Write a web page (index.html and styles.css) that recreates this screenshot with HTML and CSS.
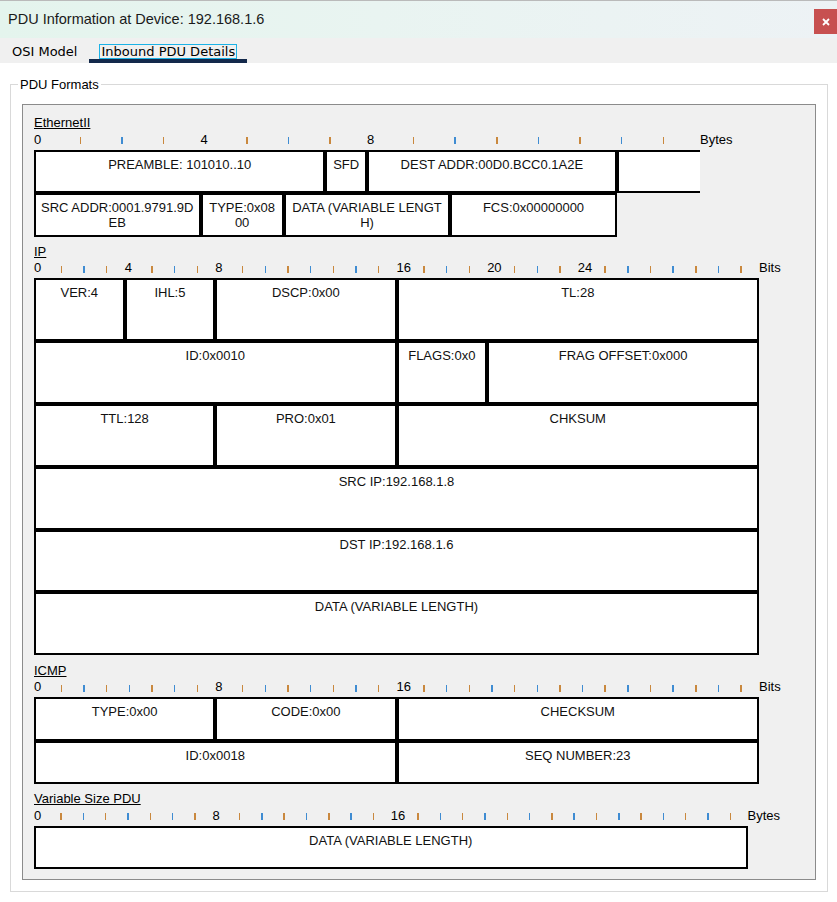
FILE: index.html
```html
<!DOCTYPE html>
<html lang="en">
<head>
<meta charset="utf-8">
<title>PDU Information at Device: 192.168.1.6</title>
<link rel="stylesheet" href="styles.css">
</head>
<body>
<div class="window">
  <header class="titlebar">
    <span class="title">PDU Information at Device: 192.168.1.6</span>
    <button class="close" aria-label="Close">
      <svg width="8" height="8" viewBox="0 0 8 8"><path d="M1 1L7 7M7 1L1 7" stroke="#fff" stroke-width="1.8" fill="none"/></svg>
    </button>
  </header>
  <nav class="tabs">
    <div class="tab">OSI Model</div>
    <div class="tab active"><span class="focus">Inbound PDU Details</span></div>
  </nav>
  <main class="content">
    <fieldset class="group">
      <legend>PDU Formats</legend>
      <div class="panel">

        <section class="pdu eth">
          <div class="pdu-title">EthernetII</div>
          <div class="ruler">
            <span class="num c0">0</span>
            <span class="num c4">4</span>
            <span class="num c8">8</span>
            <span class="unit">Bytes</span>
          </div>
          <div class="boxes">
            <div class="cell s7">PREAMBLE: 101010..10</div>
            <div class="cell s1">SFD</div>
            <div class="cell s6">DEST ADDR:00D0.BCC0.1A2E</div>
            <div class="cell s2 open"></div>
            <div class="cell s4">SRC ADDR:0001.9791.9DEB</div>
            <div class="cell s2">TYPE:0x0800</div>
            <div class="cell s4">DATA (VARIABLE LENGTH)</div>
            <div class="cell s4">FCS:0x00000000</div>
          </div>
        </section>

        <section class="pdu ip">
          <div class="pdu-title">IP</div>
          <div class="ruler">
            <span class="num c0">0</span>
            <span class="num c4">4</span>
            <span class="num c8">8</span>
            <span class="num c16">16</span>
            <span class="num c20">20</span>
            <span class="num c24">24</span>
            <span class="unit">Bits</span>
          </div>
          <div class="boxes">
            <div class="cell s4">VER:4</div>
            <div class="cell s4">IHL:5</div>
            <div class="cell s8">DSCP:0x00</div>
            <div class="cell s16">TL:28</div>
            <div class="cell s16">ID:0x0010</div>
            <div class="cell s4">FLAGS:0x0</div>
            <div class="cell s12">FRAG OFFSET:0x000</div>
            <div class="cell s8">TTL:128</div>
            <div class="cell s8">PRO:0x01</div>
            <div class="cell s16">CHKSUM</div>
            <div class="cell s32">SRC IP:192.168.1.8</div>
            <div class="cell s32">DST IP:192.168.1.6</div>
            <div class="cell s32">DATA (VARIABLE LENGTH)</div>
          </div>
        </section>

        <section class="pdu icmp">
          <div class="pdu-title">ICMP</div>
          <div class="ruler">
            <span class="num c0">0</span>
            <span class="num c8">8</span>
            <span class="num c16">16</span>
            <span class="unit">Bits</span>
          </div>
          <div class="boxes">
            <div class="cell s8">TYPE:0x00</div>
            <div class="cell s8">CODE:0x00</div>
            <div class="cell s16">CHECKSUM</div>
            <div class="cell s16">ID:0x0018</div>
            <div class="cell s16">SEQ NUMBER:23</div>
          </div>
        </section>

        <section class="pdu var">
          <div class="pdu-title">Variable Size PDU</div>
          <div class="ruler">
            <span class="num c0">0</span>
            <span class="num c8">8</span>
            <span class="num c16">16</span>
            <span class="unit">Bytes</span>
          </div>
          <div class="boxes">
            <div class="cell s32">DATA (VARIABLE LENGTH)</div>
          </div>
        </section>

      </div>
    </fieldset>
  </main>
</div>
</body>
</html>
```
FILE: styles.css
```css
html, body {
  margin: 0;
  padding: 0;
  background: #fff;
}

.window {
  width: 837px;
  height: 902px;
  overflow: hidden;
  background: #fff;
  font-family: "Liberation Sans", Arial, sans-serif;
  color: #000;
}

/* ---------- title bar ---------- */
.titlebar {
  height: 38px;
  box-sizing: border-box;
  border-top: 1px solid #bababa;
  background: linear-gradient(to right, #e4f4ed 0%, #e9f4f1 45%, #edf2f5 100%);
  display: flex;
  justify-content: space-between;
  align-items: center;
  padding-left: 8px;
}

.title {
  font: 14.5px/17px "Liberation Sans", Arial, sans-serif;
  color: #1a1a1a;
}

.close {
  align-self: flex-start;
  margin-top: 8px;
  width: 23px;
  height: 25px;
  padding: 0;
  border: 0;
  background: #c75050;
  display: flex;
  align-items: center;
  justify-content: center;
}

/* ---------- tabs ---------- */
.tabs {
  display: flex;
  height: 25px;
  background: #f0f0f0;
}

.tab {
  box-sizing: border-box;
  height: 25px;
  padding: 6px 12px 0;
  font: 13px/15px "DejaVu Sans", Verdana, sans-serif;
  color: #000;
}

.tab.active {
  padding: 6px 10px 0;
  border-bottom: 4px solid #13294b;
}

.focus {
  display: inline-block;
  line-height: 13px;
  padding: 0 1px;
  border: 1px solid #1cb2e6;
}

/* ---------- group box ---------- */
.group {
  margin: 13.5px 9px 0 10px;
  padding: 12px 0 11px;
  border: 1px solid #d9d9d9;
  min-width: 0;
}

.group legend {
  margin-left: 7px;
  padding: 0 2px;
  font: 13px/15px "Liberation Sans", Arial, sans-serif;
  color: #000;
}

.panel {
  margin: 0 11px;
  border: 1px solid #8b8b8b;
  background: #f0f0f0;
  padding: 11.8px 11px 10px;
}

/* ---------- PDU sections ---------- */
.pdu + .pdu {
  margin-top: 8.4px;
}

.eth  { --n: 16; --w: 41.64px; --row: 43.4px; }
.ip   { --n: 32; --w: 22.66px; --row: 62.8px; }
.icmp { --n: 32; --w: 22.66px; --row: 43.4px; }
.var  { --n: 32; --w: 22.31px; --row: 43.2px; }

.pdu-title {
  font: 13px/14px "Liberation Sans", Arial, sans-serif;
  text-decoration: underline;
  color: #000;
}

.ruler {
  display: grid;
  grid-template-columns: repeat(var(--n), var(--w)) auto;
  height: 19.5px;
  box-sizing: border-box;
  padding-top: 2.5px;
  font: 13px/14px "Liberation Sans", Arial, sans-serif;
  background-image: repeating-linear-gradient(to right,
    transparent 0 4px,
    #3f8cd2 4px 5.5px,
    transparent 5.5px var(--w),
    transparent var(--w) calc(var(--w) + 4px),
    #c9883e calc(var(--w) + 4px) calc(var(--w) + 5.5px),
    transparent calc(var(--w) + 5.5px) calc(var(--w) * 2));
  background-size: calc(var(--n) * var(--w)) 7px;
  background-position: 0 7px;
  background-repeat: no-repeat;
}

.num {
  grid-row: 1;
  justify-self: start;
  background: #f0f0f0;
  white-space: nowrap;
}

.c0  { grid-column: 1; }
.c4  { grid-column: 5; }
.c8  { grid-column: 9; }
.c16 { grid-column: 17; }
.c20 { grid-column: 21; }
.c24 { grid-column: 25; }

.unit {
  grid-row: 1;
  grid-column: -2 / -1;
  justify-self: start;
  white-space: nowrap;
}

.boxes {
  display: grid;
  grid-template-columns: repeat(var(--n), var(--w));
  grid-auto-rows: var(--row);
}

.cell {
  box-sizing: border-box;
  min-width: 0;
  overflow: hidden;
  border: 2px solid #000;
  background: #fff;
  padding: 5px 4px 0;
  text-align: center;
  font: 13px/15px "Liberation Sans", Arial, sans-serif;
  color: #111;
  word-break: break-all;
}

.cell.open {
  border-right: 0;
}

.s1  { grid-column: span 1; }
.s2  { grid-column: span 2; }
.s4  { grid-column: span 4; }
.s6  { grid-column: span 6; }
.s7  { grid-column: span 7; }
.s8  { grid-column: span 8; }
.s12 { grid-column: span 12; }
.s16 { grid-column: span 16; }
.s32 { grid-column: span 32; }
```
